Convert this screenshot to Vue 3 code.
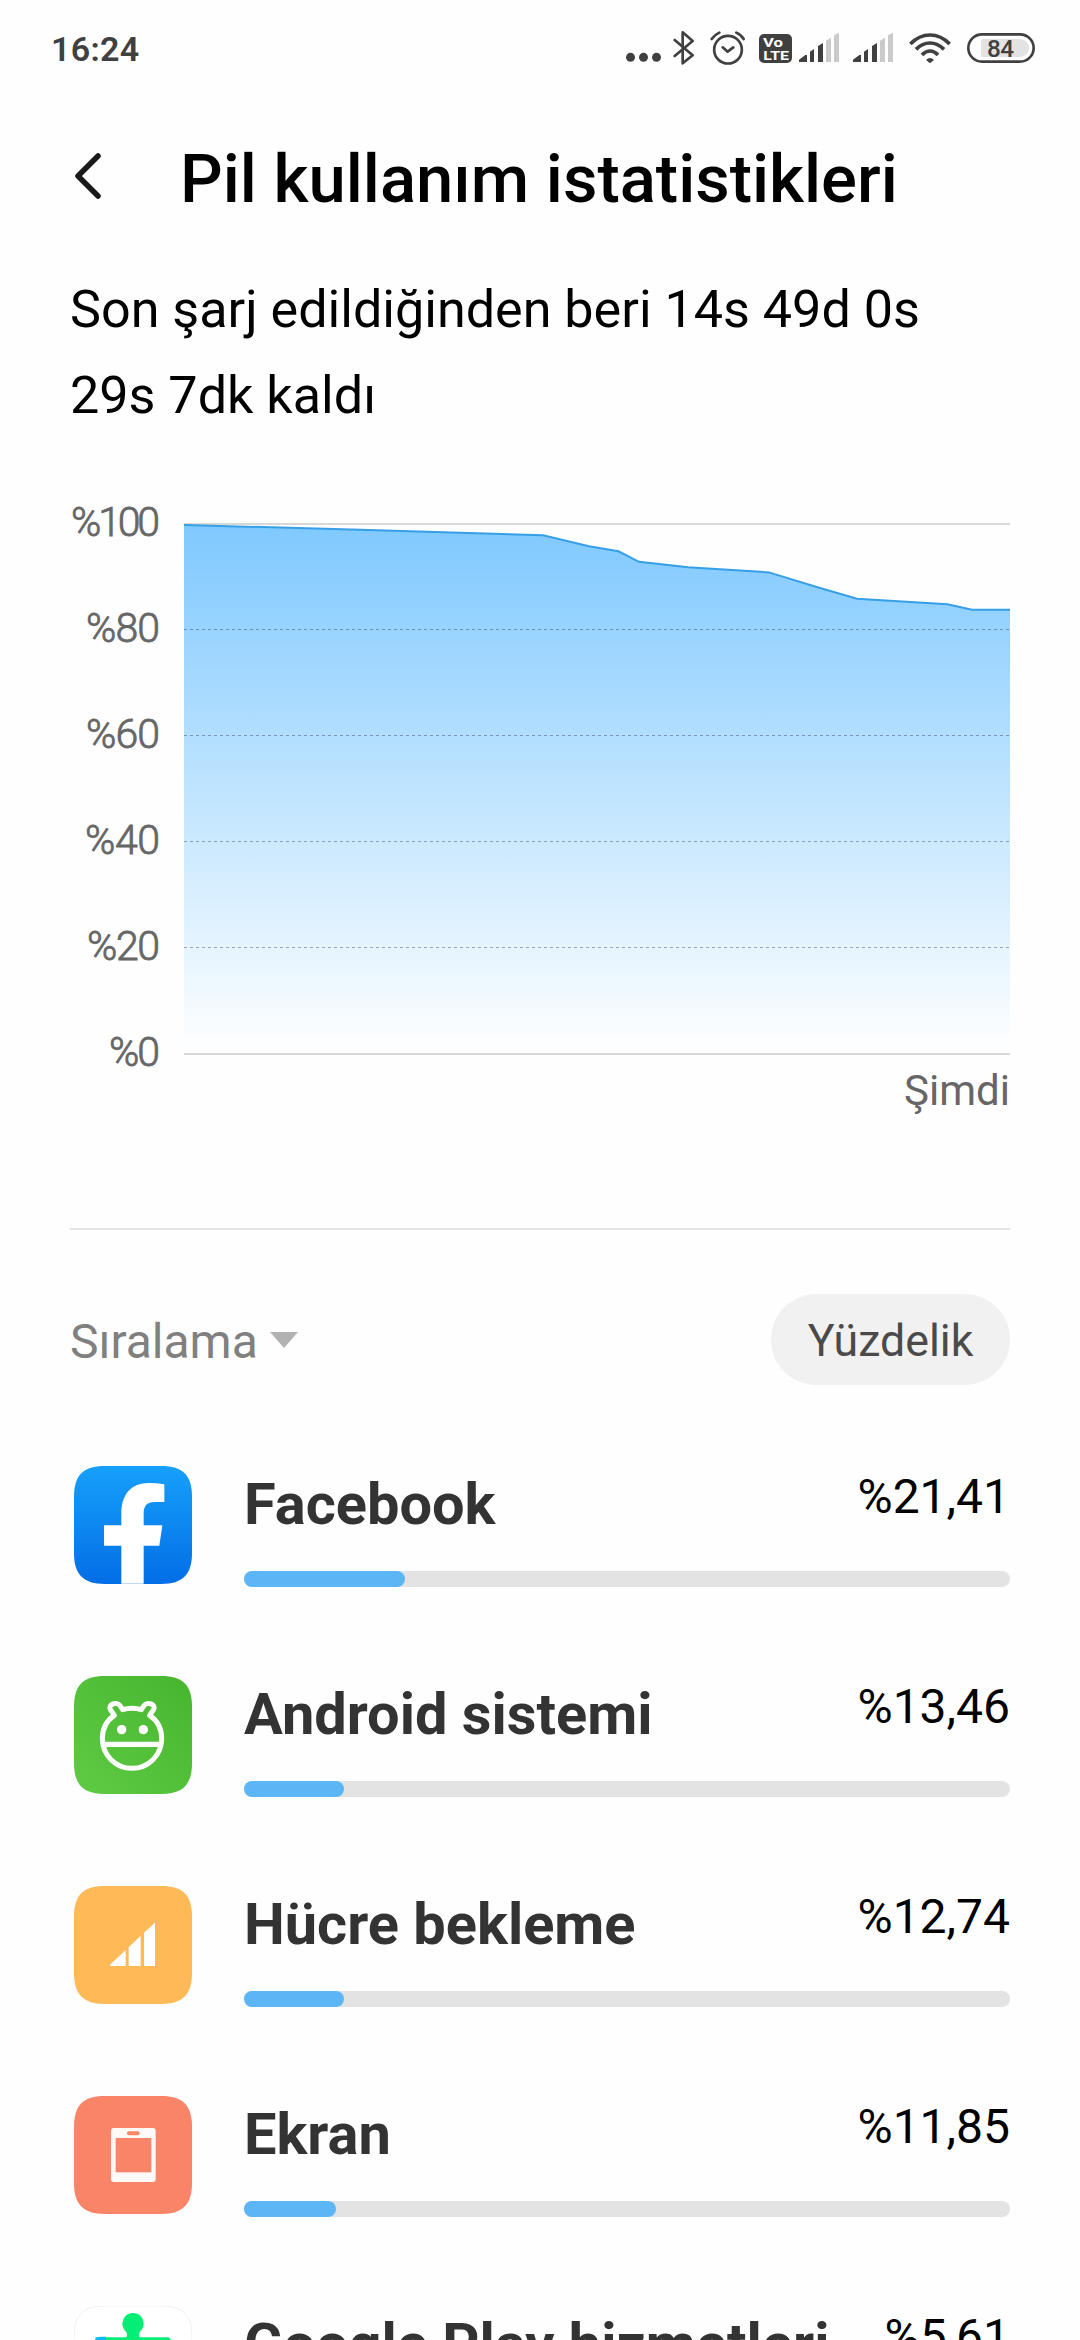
<script setup>
const levels = [
  { value: 100, width: 89 },
  { value: 80, width: 74 },
  { value: 60, width: 74 },
  { value: 40, width: 75 },
  { value: 20, width: 73 },
  { value: 0, width: 51 },
]
const gridLines = [629.5, 735.5, 841.5, 947.5]
const curve = '184,525 360,529.7 543,535.3 589,546.3 618.5,551.3 639,561.8 688,567.2 769,572.4 820,588 857,598.8 947.5,604.3 972,609.8 1010,609.8'

const apps = [
  { icon: 'facebook', name: 'Facebook', share: '%21,41', bar: 21 },
  { icon: 'android', name: 'Android sistemi', share: '%13,46', bar: 13 },
  { icon: 'cell', name: 'Hücre bekleme', share: '%12,74', bar: 13 },
  { icon: 'screen', name: 'Ekran', share: '%11,85', bar: 12 },
  { icon: 'play', name: 'Google Play hizmetleri', share: '%5,61', bar: 5 },
]

const tile = 'M92 0H262C326 0 354 28 354 92V262C354 326 326 354 262 354H92C28 354 0 326 0 262V92C0 28 28 0 92 0Z'
</script>

<template>
  <div class="page">
    <header class="status">
      <span class="clock">16:24</span>
      <div class="indicators">
        <svg class="i-dots" viewBox="75 60 108 108" fill="#404040">
          <circle cx="91.500" cy="142" r="13.500" /><circle cx="130.500" cy="142" r="13.500" /><circle cx="169.500" cy="142" r="13.500" />
        </svg>
        <svg class="i-bt" viewBox="219 60 66 108" fill="none" stroke="#404040" stroke-width="8" stroke-linecap="round" stroke-linejoin="round">
          <path d="M224 90L278 136L248 160V67L278 93L224 138" />
        </svg>
        <svg class="i-alarm" viewBox="330 60 108 108" fill="none" stroke="#404040" stroke-width="8" stroke-linecap="round" stroke-linejoin="round">
          <circle cx="384" cy="119" r="41.500" />
          <path d="M335 87Q343 75 358 68M409 68Q424 75 431 87" />
          <path d="M368 112L383 125L400 112" />
        </svg>
        <svg class="i-volte" viewBox="477 60 99 108">
          <rect x="477" y="72" width="99" height="87" rx="15" fill="#404040" />
          <text x="489" y="110" class="volte" textLength="60" lengthAdjust="spacingAndGlyphs">Vo</text>
          <text x="490" y="150" class="volte" textLength="77" lengthAdjust="spacingAndGlyphs">LTE</text>
        </svg>
        <svg v-for="n in 2" :key="n" :class="'i-signal' + n" viewBox="597 60 120 108">
          <g fill="#404040">
            <path d="M597 156V149L616 135H621V156Z" /><path d="M630 156V125L642 117V156Z" /><path d="M654 156V108L669 99V156Z" />
          </g>
          <g fill="#cacaca">
            <path d="M678 156V92L693 83V156Z" /><path d="M702 156V76L717 68V156Z" />
          </g>
        </svg>
        <svg class="i-wifi" viewBox="927 60 126 108" fill="none" stroke="#404040" stroke-width="11">
          <path d="M931 102Q957 75 990 75Q1023 75 1049 102" />
          <path d="M948 118Q967 99 990 99Q1013 99 1032 118" />
          <path d="M966 135Q977 123 990 123Q1003 123 1014 135" />
          <path d="M978 150Q990 138 1002 150L990 160Z" fill="#404040" stroke="none" />
        </svg>
        <svg class="i-battery" viewBox="1101 60 204 108">
          <rect x="1105" y="73" width="196" height="82" rx="41" fill="none" stroke="#404040" stroke-width="8" />
          <path d="M1149 87H1260A27 27 0 0 1 1260 141H1149Q1143 141 1143 135V93Q1143 87 1149 87Z" fill="#e3e3e3" />
          <text x="1161" y="140" class="charge" textLength="81">84</text>
        </svg>
      </div>
    </header>

    <div class="titlebar">
      <svg class="back" viewBox="0 0 32 52" fill="none" stroke="#1a1a1a" stroke-width="5.500" stroke-linecap="round" stroke-linejoin="round">
        <path d="M26 6L6 26L26 46" />
      </svg>
      <h1>Pil kullanım istatistikleri</h1>
    </div>

    <p class="summary">Son şarj edildiğinden beri 14s 49d 0s<br>29s 7dk kaldı</p>

    <svg class="chart" viewBox="70 490 940 640">
      <defs>
        <linearGradient id="area" gradientUnits="userSpaceOnUse" x1="0" y1="525" x2="0" y2="1053">
          <stop offset="0" stop-color="#7fc9ff" />
          <stop offset="1" stop-color="#ffffff" />
        </linearGradient>
      </defs>
      <text
        v-for="(level, i) in levels"
        :key="level.value"
        x="160"
        :y="536 + i * 106"
        :textLength="level.width"
        class="level"
      >%{{ level.value }}</text>
      <rect x="184" y="523" width="826" height="2" fill="#d8d8d8" />
      <polygon :points="curve + ' 1010,1053 184,1053'" fill="url(#area)" />
      <path v-for="y in gridLines" :key="y" :d="`M184 ${y}H1010`" stroke="#000" stroke-opacity=".32" stroke-dasharray="3 3" />
      <polyline :points="curve" fill="none" stroke="#369fe6" stroke-width="2" />
      <rect x="184" y="1053" width="826" height="2" fill="#d8d8d8" />
      <text x="1010" y="1105" class="now">Şimdi</text>
    </svg>

    <hr>

    <div class="sortbar">
      <div class="sort">
        <span>Sıralama</span>
        <svg viewBox="0 0 28 16"><path d="M0 0H28L14 16Z" fill="#b2b2b2" /></svg>
      </div>
      <div class="mode">Yüzdelik</div>
    </div>

    <ul class="apps">
      <li v-for="app in apps" :key="app.icon">
        <svg class="tile" viewBox="0 0 354 354">
          <template v-if="app.icon === 'facebook'">
            <linearGradient id="fb" x1="0" y1="0" x2="0" y2="1">
              <stop offset="0" stop-color="#16a0fb" /><stop offset="1" stop-color="#036ee6" />
            </linearGradient>
            <path :d="tile" fill="url(#fb)" />
            <path d="M142 353V239H90V178H142V142C142 85 172 51 224 51Q248 51 271 55V108H243C217 108 209 121 209 143V178H265L256 239H209V353Z" fill="#fff" />
          </template>
          <template v-else-if="app.icon === 'android'">
            <linearGradient id="droid" x1="0" y1="1" x2="1" y2="0">
              <stop offset="0" stop-color="#60cb45" /><stop offset="1" stop-color="#46b52e" />
            </linearGradient>
            <path :d="tile" fill="url(#droid)" />
            <g fill="none" stroke="#fff" stroke-width="15" stroke-linejoin="round">
              <path d="M146 101Q174 92 202 101L209 90C219 74 247 86 239 100L227 118C252 135 263 160 263 187C263 238 223 277 174 277C125 277 85 238 85 187C85 160 96 135 121 118L109 100C101 86 129 74 139 90Z" />
              <path d="M88 205H260" stroke-width="16" />
            </g>
            <circle cx="143" cy="161" r="14" fill="#fff" /><circle cx="208" cy="161" r="14" fill="#fff" />
          </template>
          <template v-else-if="app.icon === 'cell'">
            <path :d="tile" fill="#ffb957" />
            <path d="M108 236L155 192V240H110Q106 240 108 236ZM164 184L200 149V240H164ZM210 140L243 110V240H210Z" fill="#fff" />
          </template>
          <template v-else-if="app.icon === 'screen'">
            <path :d="tile" fill="#fa8467" />
            <rect x="111" y="96" width="134" height="162" rx="8" fill="#fffaf7" />
            <rect x="125" y="126" width="107" height="103" fill="#fa8467" />
            <rect x="159" y="106" width="38" height="12" rx="6" fill="#fa8467" />
          </template>
          <template v-else>
            <path :d="tile" fill="#fff" stroke="#e8e8e8" stroke-width="2" />
            <path d="M157 94Q162 85 155 76A32 32 0 1 1 199 76Q192 85 197 94H280Q290 94 290 104V300H64V94Z" fill="#04ee76" />
            <path d="M64 104Q64 92 80 92H96V300H64Z" fill="#12b8ff" />
          </template>
        </svg>
        <div class="usage">
          <div class="line">
            <span class="name">{{ app.name }}</span>
            <span class="share">{{ app.share }}</span>
          </div>
          <div class="track"><div class="fill" :style="{ width: app.bar + '%' }"></div></div>
        </div>
      </li>
    </ul>
  </div>
</template>

<style>
body { margin: 0; background: #fefefe; }
</style>

<style scoped>
.page {
  width: 1080px;
  height: 2340px;
  overflow: hidden;
  background: #fefefe;
  color: #000;
  font-family: Roboto, "Noto Sans", sans-serif;
}
svg { display: block; flex: none; }
.status {
  height: 96px;
  box-sizing: border-box;
  padding: 0 45px 0 51px;
  display: flex;
  justify-content: space-between;
}
.clock {
  margin-top: 29px;
  font-size: 34px;
  line-height: 40px;
  font-weight: 600;
  letter-spacing: .3px;
  color: #404040;
}
.indicators { display: flex; margin-top: 30px; height: 36px; }
.indicators svg { height: 36px; }
.i-dots { width: 36px; }
.i-bt { width: 22px; margin-left: 12px; }
.i-alarm { width: 36px; margin-left: 15px; }
.i-volte { width: 33px; margin-left: 13px; }
.i-signal1 { width: 40px; margin-left: 7px; }
.i-signal2 { width: 40px; margin-left: 14px; }
.i-wifi { width: 42px; margin-left: 16px; }
.i-battery { width: 68px; margin-left: 16px; }
.volte { font-size: 39px; font-weight: 700; fill: #fff; }
.charge { font-size: 73px; font-weight: 500; fill: #404040; }
.titlebar { height: 167px; display: flex; align-items: center; padding-left: 72px; }
.back { width: 32px; height: 52px; margin-top: -7px; }
h1 {
  margin: -2px 0 0 76px;
  font-size: 67px;
  line-height: 78px;
  font-weight: 500;
  white-space: nowrap;
}
.summary { margin: 4px 70px 0; font-size: 52.100px; line-height: 86px; white-space: nowrap; }
.chart { width: 940px; height: 640px; margin: 51px 70px 0; overflow: visible; }
.level { font-size: 41px; font-weight: 300; fill: #666; stroke: #666; stroke-width: .8px; text-anchor: end; }
.now { font-size: 42px; fill: #666; text-anchor: end; }
hr { margin: 98px 70px 0; border: 0; height: 2px; background: #e4e4e4; }
.sortbar { margin: 64px 70px 0; height: 91px; display: flex; justify-content: space-between; align-items: center; }
.sort { display: flex; align-items: center; gap: 12px; font-size: 48px; line-height: 58px; color: #808080; }
.sort span { margin-top: 4px; }
.mode {
  width: 239px;
  height: 91px;
  border-radius: 46px;
  background: #f1f1f1;
  color: #4a4a4a;
  font-size: 44.700px;
  line-height: 95px;
  text-align: center;
}
.sort svg { width: 28px; height: 16px; }
.apps { list-style: none; margin: 35px 0 0; padding: 0 70px 0 74px; }
.apps li { height: 164px; padding-top: 46px; display: flex; }
.tile { width: 118px; height: 118px; }
.usage { flex: 1; margin-left: 52px; }
.line { height: 105px; display: flex; justify-content: space-between; align-items: flex-start; white-space: nowrap; }
.name { margin-top: 4px; font-size: 57.750px; line-height: 68px; font-weight: 700; color: #333; }
.share { margin-top: 3px; font-size: 48px; line-height: 56px; }
.track { height: 16px; border-radius: 8px; background: #e3e3e3; }
.fill { height: 16px; border-radius: 8px; background: #5cb6f5; }
</style>
